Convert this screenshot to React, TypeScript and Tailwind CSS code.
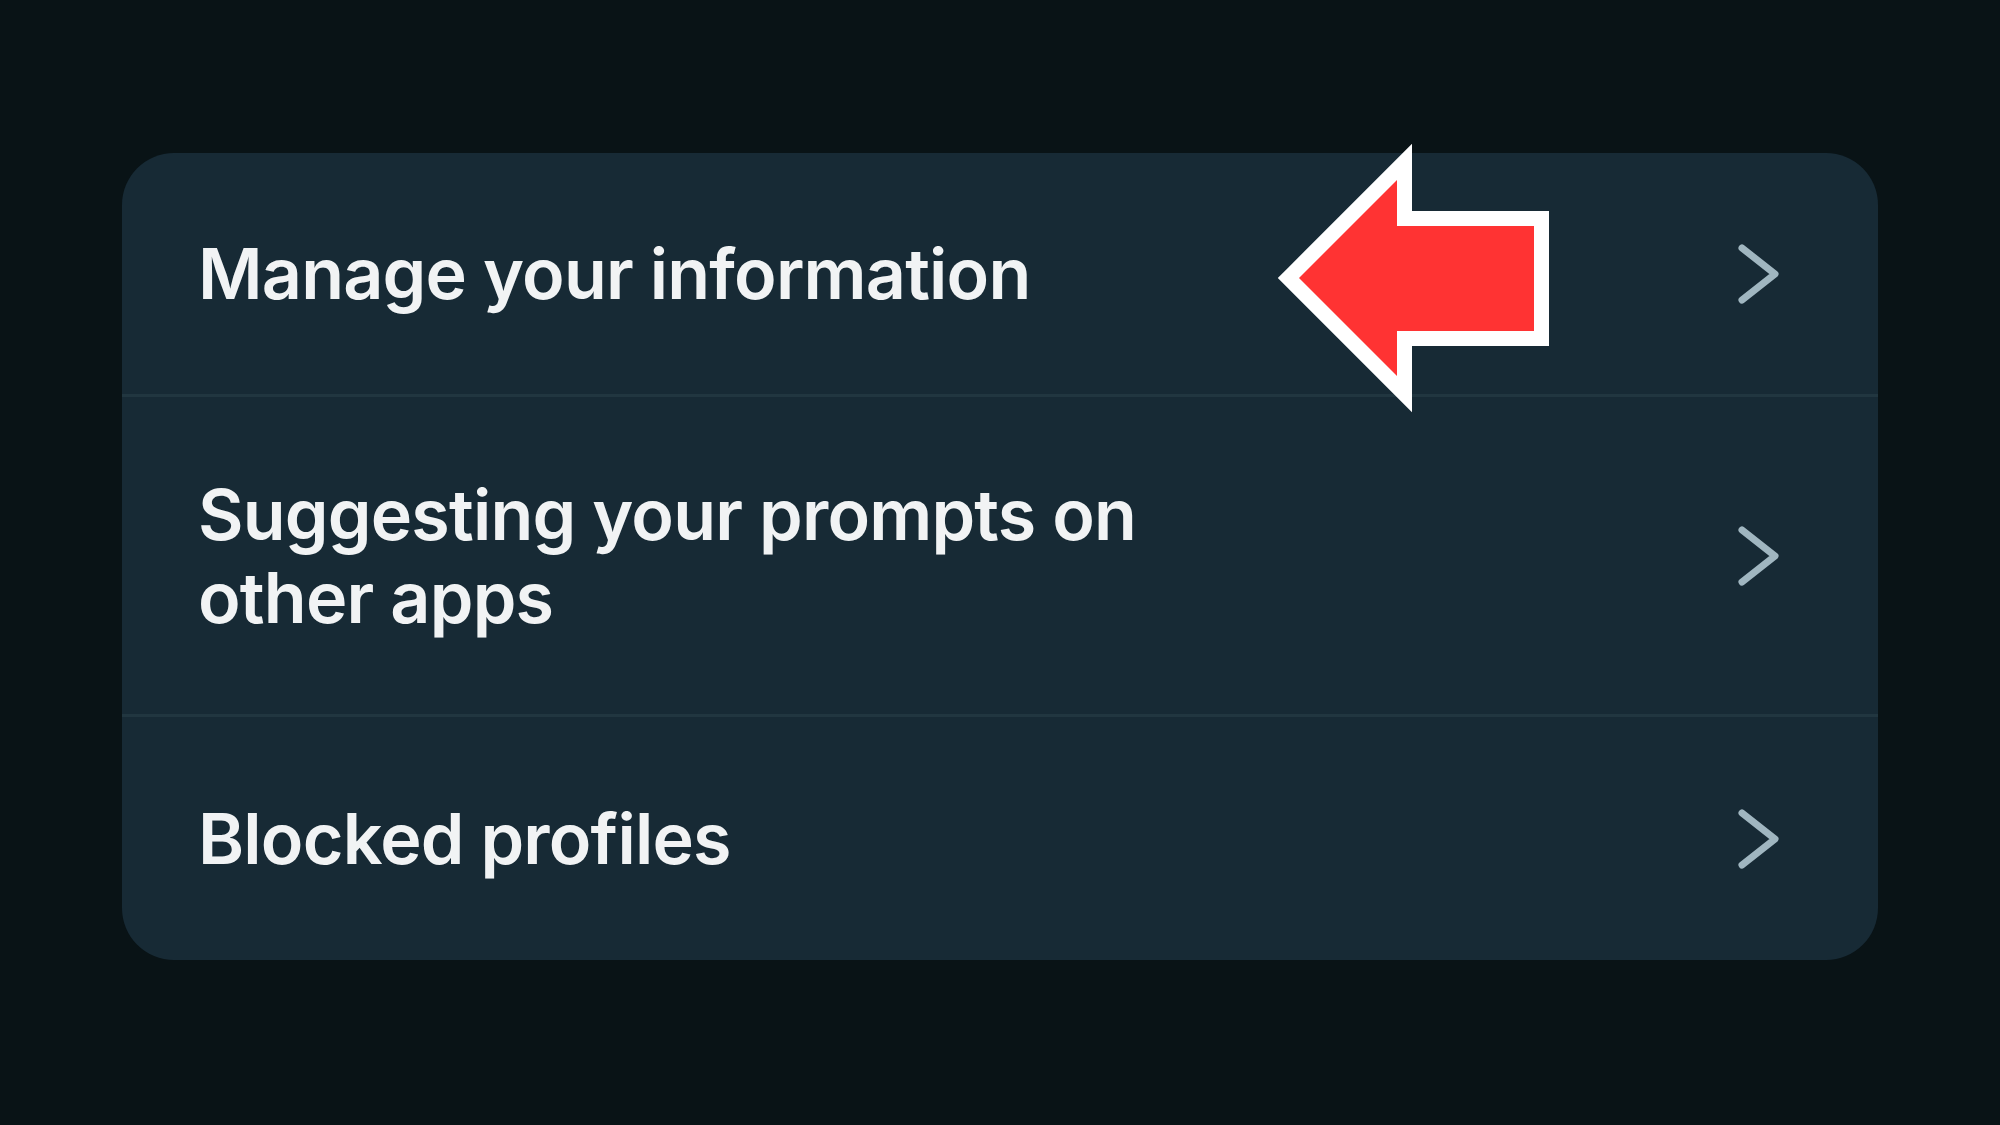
import { ReactNode } from "react";

const Chevron = () => (
  <svg width="44" height="66" viewBox="0 0 44 66" className="shrink-0">
    <path d="M6 7 L39 33 L6 59" fill="none" stroke="#a0b6c0" strokeWidth="7" strokeLinecap="round" strokeLinejoin="round" />
  </svg>
);

const Row = ({ children, height, last }: { children: ReactNode; height: string; last?: boolean }) => (
  <div className={`flex items-center justify-between pl-[76px] pr-[98px] ${height} ${last ? "" : "border-b-[3px] border-[#213640]"}`}>
    <div className="text-[70px] leading-[83px] font-semibold text-[#f1f3f4] tracking-[-0.8px]">{children}</div>
    <Chevron />
  </div>
);

const App = () => {
  return (
    <div className="relative w-[2000px] h-[1125px] bg-[#091316] overflow-hidden" style={{ fontFamily: "Inter, 'Liberation Sans', sans-serif" }}>
      <div className="pt-[153px] pl-[122px]">
        <div className="w-[1756px] rounded-[52px] bg-[#172a35] overflow-hidden">
          <Row height="h-[244px]">Manage your information</Row>
          <Row height="h-[320px]">
            Suggesting your prompts on
            <br />
            other apps
          </Row>
          <Row height="h-[243px]" last>
            Blocked profiles
          </Row>
        </div>
      </div>

      {/* red annotation arrow */}
      <svg className="absolute left-0 top-0" width="2000" height="1125" viewBox="0 0 2000 1125">
        <polygon
          points="1299,278 1397,180 1397,226 1534,226 1534,331 1397,331 1397,376"
          fill="#ff3333"
          stroke="#ffffff"
          strokeWidth="30"
          strokeLinejoin="miter"
          strokeMiterlimit="10"
        />
        <polygon points="1299,278 1397,180 1397,226 1534,226 1534,331 1397,331 1397,376" fill="#ff3333" />
      </svg>
    </div>
  );
};

export default App;
